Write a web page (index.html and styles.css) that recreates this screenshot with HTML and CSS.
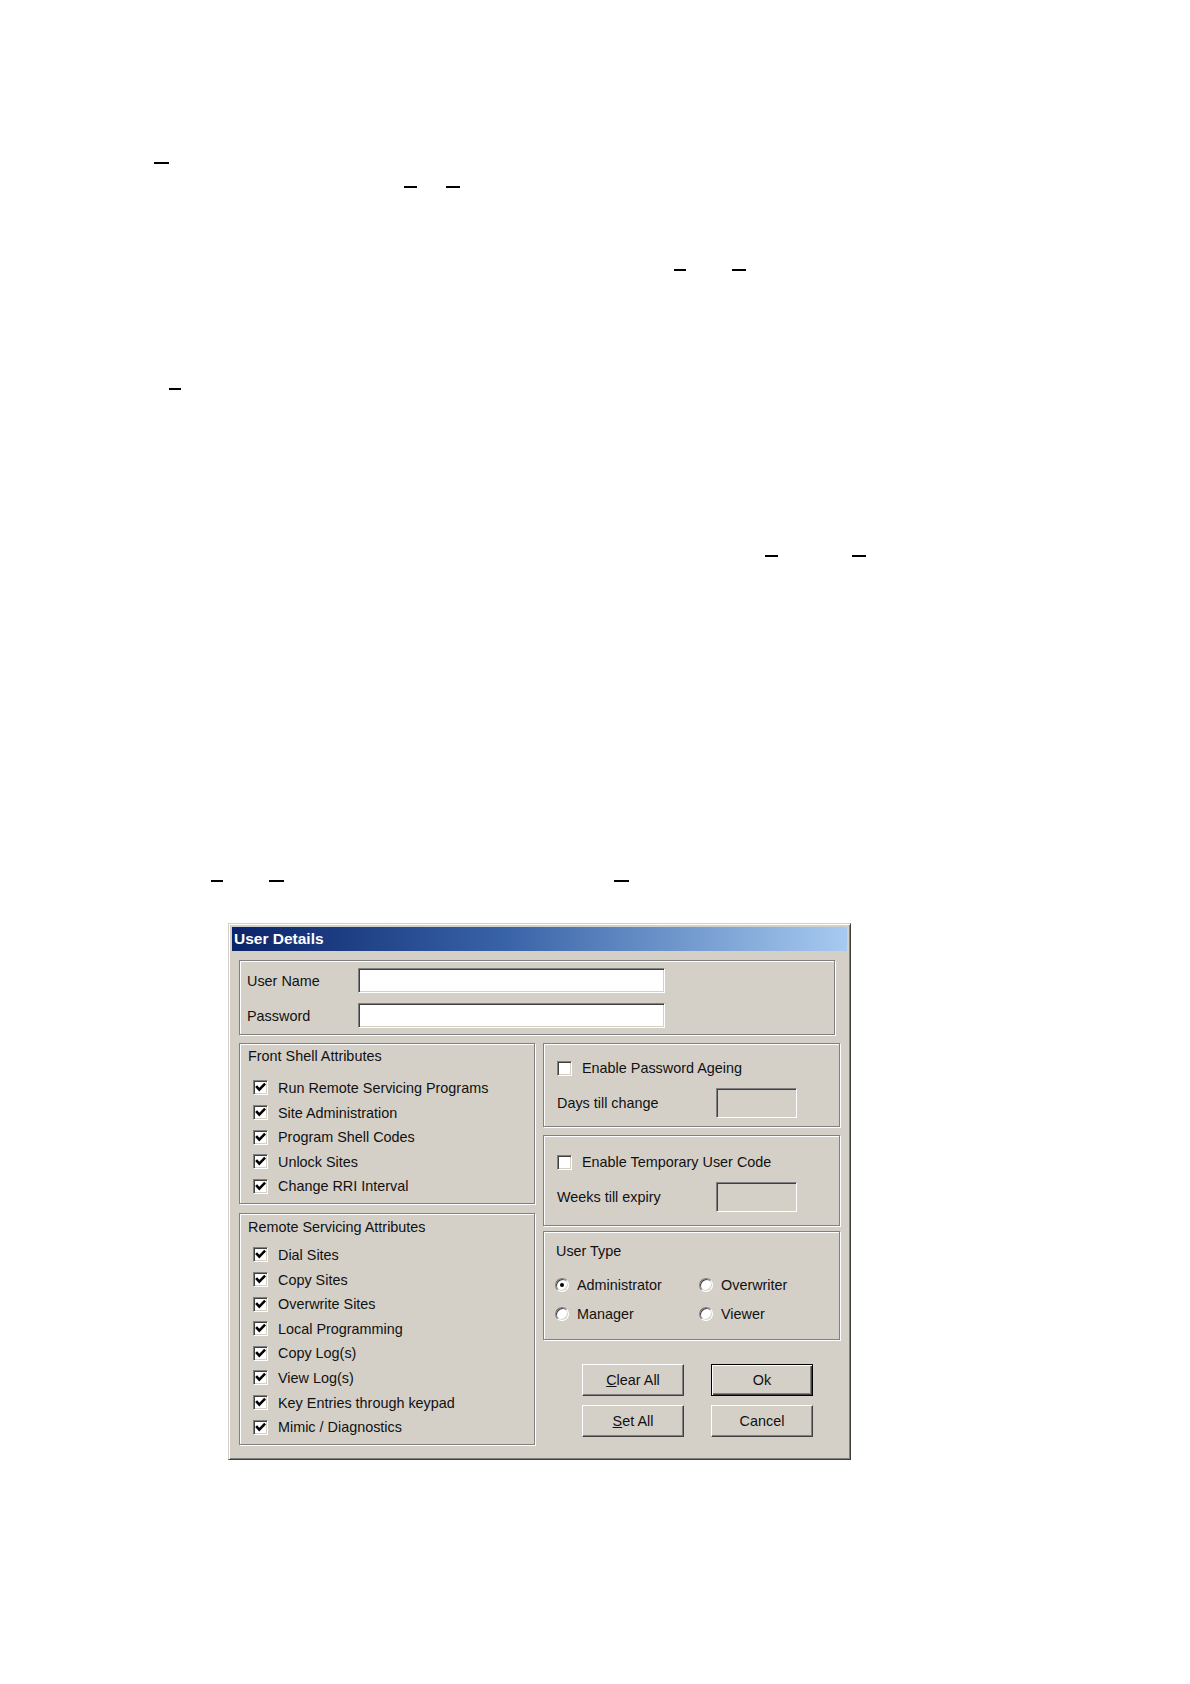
FILE: index.html
```html
<!DOCTYPE html>
<html lang="en">
<head>
<meta charset="utf-8">
<title>User Details</title>
<link rel="stylesheet" href="styles.css">
</head>
<body>
<div class="sheet">
  <div class="marks">
    <div class="mark-row r1"><span class="dash m1a"></span></div>
    <div class="mark-row r2"><span class="dash m2a"></span><span class="dash m2b"></span></div>
    <div class="mark-row r3"><span class="dash m3a"></span><span class="dash m3b"></span></div>
    <div class="mark-row r4"><span class="dash m4a"></span></div>
    <div class="mark-row r5"><span class="dash m5a"></span><span class="dash m5b"></span></div>
    <div class="mark-row r6"><span class="dash m6a"></span><span class="dash m6b"></span><span class="dash m6c"></span></div>
  </div>

  <div class="dialog">
    <div class="titlebar">User Details</div>
    <div class="dlg-body">
      <div class="group creds">
        <div class="field-row"><span class="field-label">User Name</span><span class="text-input"></span></div>
        <div class="field-row"><span class="field-label">Password</span><span class="text-input"></span></div>
      </div>

      <div class="columns">
        <div class="col-left">
          <div class="group front">
            <div class="heading">Front Shell Attributes</div>
            <div class="check-list">
              <div class="check-row"><span class="checkbox"><svg viewBox="0 0 11 11" width="11" height="11"><path d="M2 5 L4.3 7.6 L9.2 2.6" /></svg></span>Run Remote Servicing Programs</div>
              <div class="check-row"><span class="checkbox"><svg viewBox="0 0 11 11" width="11" height="11"><path d="M2 5 L4.3 7.6 L9.2 2.6" /></svg></span>Site Administration</div>
              <div class="check-row"><span class="checkbox"><svg viewBox="0 0 11 11" width="11" height="11"><path d="M2 5 L4.3 7.6 L9.2 2.6" /></svg></span>Program Shell Codes</div>
              <div class="check-row"><span class="checkbox"><svg viewBox="0 0 11 11" width="11" height="11"><path d="M2 5 L4.3 7.6 L9.2 2.6" /></svg></span>Unlock Sites</div>
              <div class="check-row"><span class="checkbox"><svg viewBox="0 0 11 11" width="11" height="11"><path d="M2 5 L4.3 7.6 L9.2 2.6" /></svg></span>Change RRI Interval</div>
            </div>
          </div>
          <div class="group remote">
            <div class="heading">Remote Servicing Attributes</div>
            <div class="check-list">
              <div class="check-row"><span class="checkbox"><svg viewBox="0 0 11 11" width="11" height="11"><path d="M2 5 L4.3 7.6 L9.2 2.6" /></svg></span>Dial Sites</div>
              <div class="check-row"><span class="checkbox"><svg viewBox="0 0 11 11" width="11" height="11"><path d="M2 5 L4.3 7.6 L9.2 2.6" /></svg></span>Copy Sites</div>
              <div class="check-row"><span class="checkbox"><svg viewBox="0 0 11 11" width="11" height="11"><path d="M2 5 L4.3 7.6 L9.2 2.6" /></svg></span>Overwrite Sites</div>
              <div class="check-row"><span class="checkbox"><svg viewBox="0 0 11 11" width="11" height="11"><path d="M2 5 L4.3 7.6 L9.2 2.6" /></svg></span>Local Programming</div>
              <div class="check-row"><span class="checkbox"><svg viewBox="0 0 11 11" width="11" height="11"><path d="M2 5 L4.3 7.6 L9.2 2.6" /></svg></span>Copy Log(s)</div>
              <div class="check-row"><span class="checkbox"><svg viewBox="0 0 11 11" width="11" height="11"><path d="M2 5 L4.3 7.6 L9.2 2.6" /></svg></span>View Log(s)</div>
              <div class="check-row"><span class="checkbox"><svg viewBox="0 0 11 11" width="11" height="11"><path d="M2 5 L4.3 7.6 L9.2 2.6" /></svg></span>Key Entries through keypad</div>
              <div class="check-row"><span class="checkbox"><svg viewBox="0 0 11 11" width="11" height="11"><path d="M2 5 L4.3 7.6 L9.2 2.6" /></svg></span>Mimic / Diagnostics</div>
            </div>
          </div>
        </div>

        <div class="col-right">
          <div class="group ageing">
            <div class="opt-row"><span class="checkbox"></span>Enable Password Ageing</div>
            <div class="value-row"><span class="value-label">Days till change</span><span class="small-input"></span></div>
          </div>
          <div class="group temp">
            <div class="opt-row"><span class="checkbox"></span>Enable Temporary User Code</div>
            <div class="value-row"><span class="value-label">Weeks till expiry</span><span class="small-input"></span></div>
          </div>
          <div class="group usertype">
            <div class="heading">User Type</div>
            <div class="radio-grid">
              <div class="radio-row"><span class="radio on"></span>Administrator</div>
              <div class="radio-row"><span class="radio"></span>Overwriter</div>
              <div class="radio-row"><span class="radio"></span>Manager</div>
              <div class="radio-row"><span class="radio"></span>Viewer</div>
            </div>
          </div>
          <div class="buttons">
            <div class="btn"><span><span class="accel">C</span>lear All</span></div>
            <div class="btn btn-default">Ok</div>
            <div class="btn"><span><span class="accel">S</span>et All</span></div>
            <div class="btn">Cancel</div>
          </div>
        </div>
      </div>
    </div>
  </div>
</div>
</body>
</html>
```

FILE: styles.css
```css
* { box-sizing: border-box; }

html, body {
  margin: 0;
  padding: 0;
  background: #ffffff;
}

body {
  font-family: "Liberation Sans", Arial, sans-serif;
  font-size: 14.4px;
  color: #111;
}

.sheet {
  width: 1190px;
  height: 1684px;
  overflow: hidden;
  display: flex;
  flex-direction: column;
}

/* stray underline marks of the page */
.marks { display: flex; flex-direction: column; }
.mark-row { display: flex; height: 2px; }
.dash { display: block; height: 2px; background: #000; flex: none; }

.r1 { margin-top: 162px; }
.r2 { margin-top: 22px; }
.r3 { margin-top: 81px; }
.r4 { margin-top: 117px; }
.r5 { margin-top: 165px; }
.r6 { margin-top: 323px; }

.m1a { margin-left: 154px; width: 15px; }
.m2a { margin-left: 404px; width: 13px; }
.m2b { margin-left: 29px; width: 14px; }
.m3a { margin-left: 674px; width: 12px; }
.m3b { margin-left: 46px; width: 14px; }
.m4a { margin-left: 169px; width: 12px; }
.m5a { margin-left: 765px; width: 13px; }
.m5b { margin-left: 74px; width: 14px; }
.m6a { margin-left: 211px; width: 12px; }
.m6b { margin-left: 46px; width: 15px; }
.m6c { margin-left: 330px; width: 15px; }

/* dialog window */
.dialog {
  margin: 41px 0 0 228px;
  width: 623px;
  height: 537px;
  flex: none;
  background: #d4d0c8;
  border: 1px solid;
  border-color: #d4d0c8 #404040 #404040 #d4d0c8;
  box-shadow: inset 1px 1px 0 #ffffff, inset -1px -1px 0 #808080;
  padding: 3px;
}

.titlebar {
  height: 24px;
  line-height: 24px;
  padding-left: 2px;
  color: #ffffff;
  font-weight: bold;
  font-size: 15.5px;
  background: linear-gradient(90deg, #0a246a 0%, #3a64a8 45%, #a6caf0 100%);
}

.dlg-body {
  padding: 9px 0 0 7px;
}

.group {
  border: 1px solid #808080;
  box-shadow: inset 1px 1px 0 #ffffff, 1px 1px 0 #ffffff;
}

.creds {
  width: 596px;
  height: 75px;
  padding: 7px 0 0 7px;
  display: flex;
  flex-direction: column;
  gap: 10px;
}

.field-row {
  display: flex;
  align-items: center;
  height: 25px;
}

.field-label { width: 111px; }

.text-input {
  width: 307px;
  height: 25px;
  background: #ffffff;
  border: 1px solid;
  border-color: #808080 #ffffff #ffffff #808080;
  box-shadow: inset 1px 1px 0 #404040, inset -1px -1px 0 #d4d0c8;
}

.columns {
  display: flex;
  gap: 8px;
  margin-top: 8px;
}

.col-left {
  width: 296px;
  display: flex;
  flex-direction: column;
  gap: 9px;
}

.col-right {
  width: 297px;
  display: flex;
  flex-direction: column;
}

.heading {
  line-height: 18px;
  padding-left: 8px;
}

.front { height: 161px; padding-top: 3px; }
.front .heading { margin-bottom: 10.7px; }

.remote { height: 232px; padding-top: 4px; }
.remote .heading { margin-bottom: 6.7px; }

.check-list { padding-left: 13px; }

.check-row {
  display: flex;
  align-items: center;
  height: 24.6px;
}

.checkbox {
  width: 15px;
  height: 15px;
  flex: none;
  margin-right: 10px;
  background: #ffffff;
  border: 1px solid;
  border-color: #808080 #ffffff #ffffff #808080;
  box-shadow: inset 1px 1px 0 #404040, inset -1px -1px 0 #d4d0c8;
  display: flex;
  align-items: center;
  justify-content: center;
}

.checkbox svg path {
  fill: none;
  stroke: #000;
  stroke-width: 2.6;
  stroke-linecap: square;
  stroke-linejoin: miter;
}

.ageing { height: 84px; padding: 14px 0 0 13px; }
.temp { height: 91px; margin-top: 8px; padding: 16px 0 0 13px; }

.opt-row {
  display: flex;
  align-items: center;
  height: 20px;
}

.value-row {
  display: flex;
  align-items: center;
  height: 30px;
  margin-top: 10px;
}

.value-label { width: 159px; }

.small-input {
  width: 81px;
  height: 30px;
  background: #d4d0c8;
  border: 1px solid;
  border-color: #808080 #ffffff #ffffff #808080;
  box-shadow: inset 1px 1px 0 #404040, inset -1px -1px 0 #d4d0c8;
}

.usertype { height: 109px; margin-top: 5px; padding: 10px 0 0 12px; }
.usertype .heading { padding-left: 0; margin-bottom: 15px; }

.radio-grid {
  display: grid;
  grid-template-columns: 144px auto;
  row-gap: 9px;
  margin-left: -1px;
}

.radio-row {
  display: flex;
  align-items: center;
  height: 20px;
}

.radio {
  width: 14px;
  height: 14px;
  flex: none;
  margin-right: 8px;
  border-radius: 50%;
  background: #ffffff;
  border: 1px solid;
  border-color: #808080 #ffffff #ffffff #808080;
  box-shadow: inset 1px 1px 0 #404040, inset -1px -1px 0 #d4d0c8;
  display: flex;
  align-items: center;
  justify-content: center;
}

.radio.on::after {
  content: "";
  width: 4px;
  height: 4px;
  border-radius: 50%;
  background: #000;
}

.buttons {
  margin-top: 24px;
  padding-left: 39px;
  display: grid;
  grid-template-columns: 102px 102px;
  column-gap: 27px;
  row-gap: 9px;
}

.btn {
  height: 32px;
  background: #d4d0c8;
  border: 1px solid;
  border-color: #ffffff #404040 #404040 #ffffff;
  box-shadow: inset -1px -1px 0 #808080;
  display: flex;
  align-items: center;
  justify-content: center;
}

.btn-default {
  border: 1px solid #000;
  box-shadow: inset 1px 1px 0 #ffffff, inset -1px -1px 0 #404040, inset -2px -2px 0 #808080;
}

.accel { text-decoration: underline; }
```
